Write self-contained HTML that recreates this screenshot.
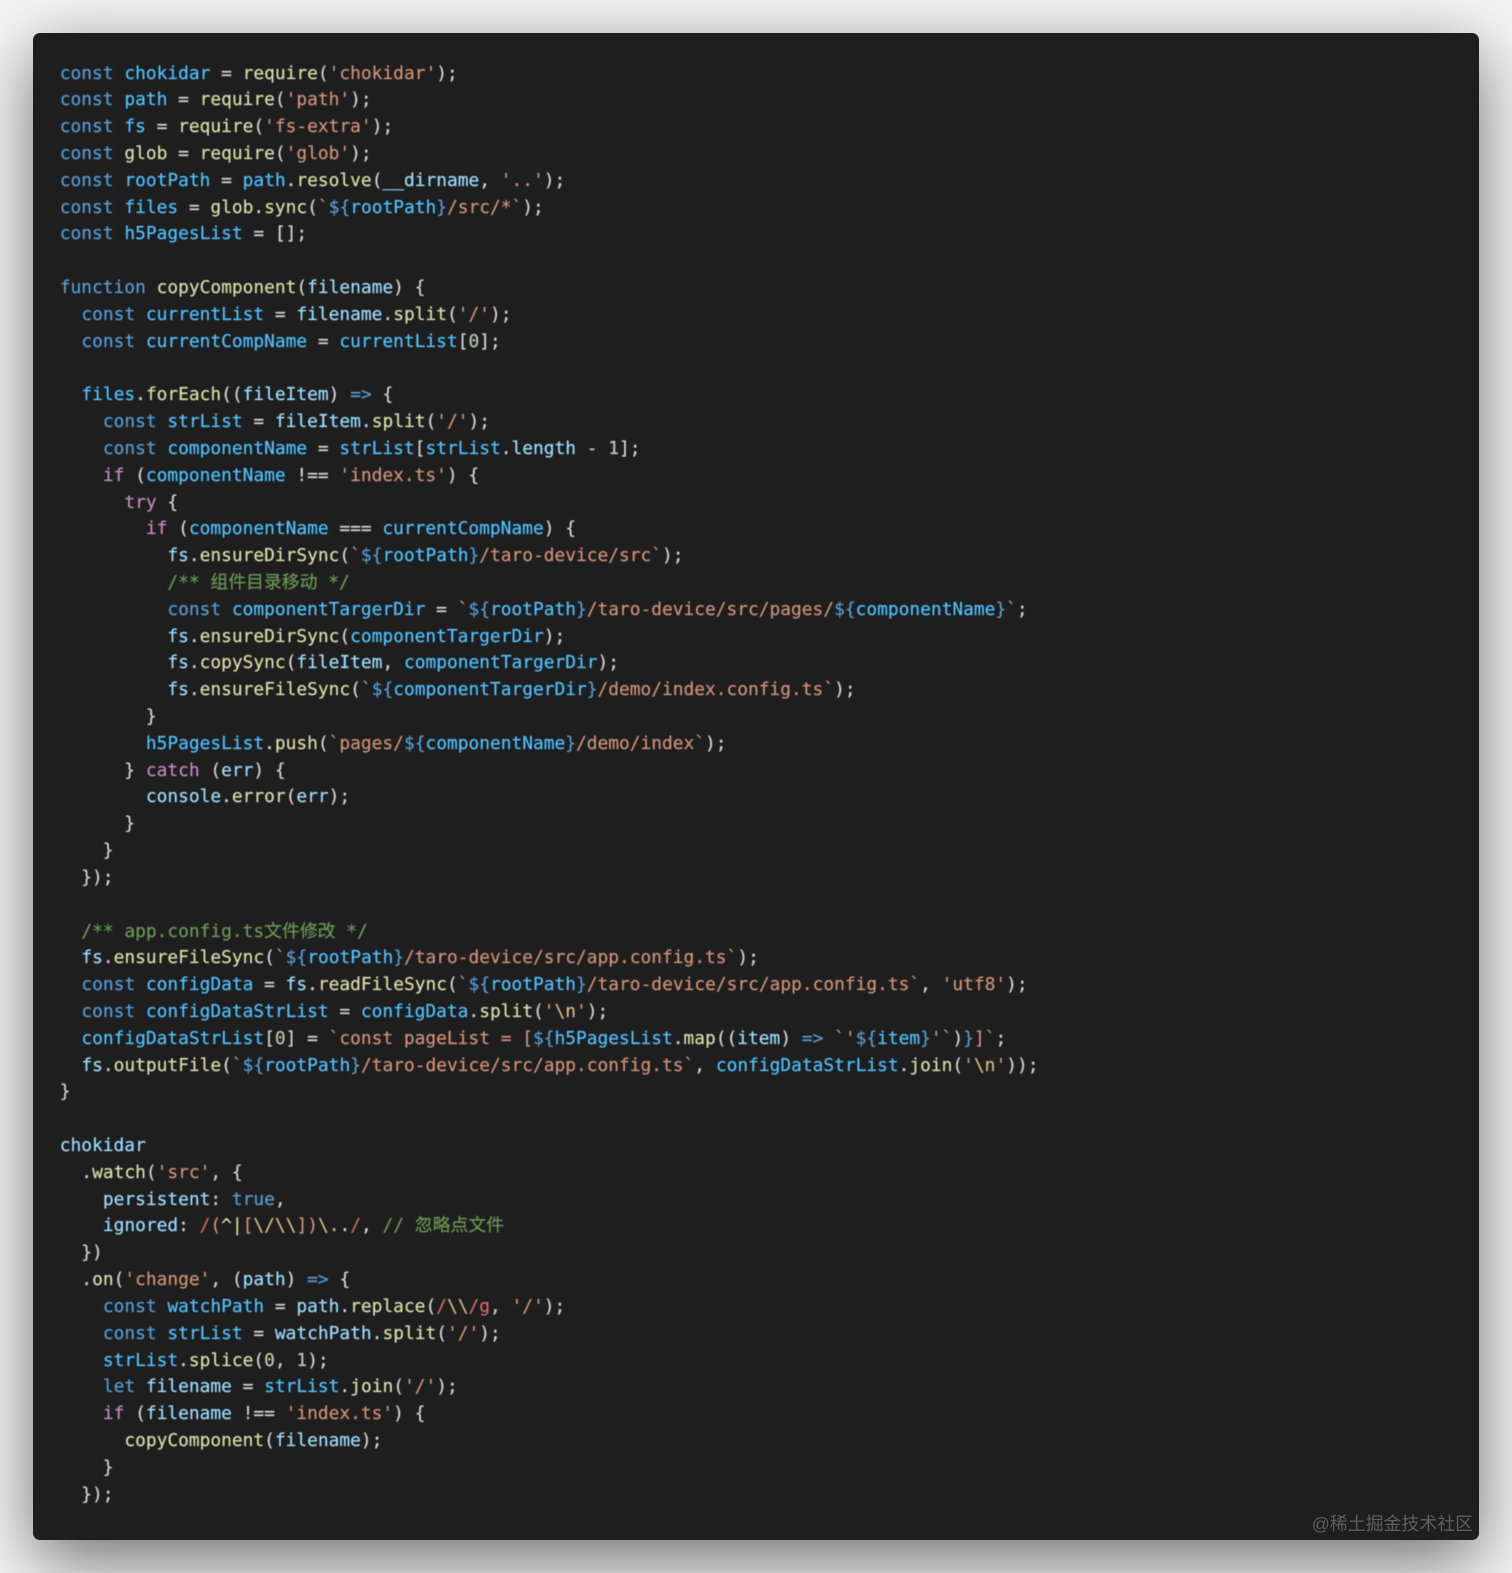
<!DOCTYPE html>
<html><head><meta charset="utf-8"><style>
html,body{margin:0;padding:0;background:#fff}
body{width:1512px;height:1573px;overflow:hidden;position:relative;background:#f4f4f4}
#card{position:absolute;left:33px;top:33px;width:1446px;height:1507px;background:#1e1e1e;border-radius:7px;box-shadow:0 20px 68px rgba(0,0,0,.55)}
pre{position:absolute;margin:0;left:59.8px;top:60.5px;font:17.87px/26.82px "DejaVu Sans Mono","Noto Sans CJK SC",monospace;color:#d4d4d4;filter:blur(.4px);white-space:pre;z-index:2;-webkit-text-stroke:.2px currentColor}
.k{color:#569cd6}.c{color:#4fc1ff}.v{color:#9cdcfe}.f{color:#dcdcaa}.s{color:#ce9178}.m{color:#6a9955}.p{color:#c586c0}.n{color:#b5cea8}.r{color:#d16969}.e{color:#d7ba7d}
#wm{position:absolute;right:39px;top:1513px;font:17.9px/22px "Liberation Sans","Noto Sans CJK SC",sans-serif;color:#5f5f5f;z-index:3;filter:blur(.3px)}
</style></head><body>
<div id="card"></div>
<pre><span class="k">const</span> <span class="c">chokidar</span> = <span class="f">require</span>(<span class="s">'chokidar'</span>);
<span class="k">const</span> <span class="c">path</span> = <span class="f">require</span>(<span class="s">'path'</span>);
<span class="k">const</span> <span class="c">fs</span> = <span class="f">require</span>(<span class="s">'fs-extra'</span>);
<span class="k">const</span> <span class="f">glob</span> = <span class="f">require</span>(<span class="s">'glob'</span>);
<span class="k">const</span> <span class="c">rootPath</span> = <span class="c">path</span>.<span class="f">resolve</span>(<span class="v">__dirname</span>, <span class="s">'..'</span>);
<span class="k">const</span> <span class="c">files</span> = <span class="f">glob</span>.<span class="f">sync</span>(<span class="s">`</span><span class="k">${</span><span class="c">rootPath</span><span class="k">}</span><span class="s">/src/*`</span>);
<span class="k">const</span> <span class="c">h5PagesList</span> = [];

<span class="k">function</span> <span class="f">copyComponent</span>(<span class="v">filename</span>) {
  <span class="k">const</span> <span class="c">currentList</span> = <span class="v">filename</span>.<span class="f">split</span>(<span class="s">'/'</span>);
  <span class="k">const</span> <span class="c">currentCompName</span> = <span class="c">currentList</span>[<span class="n">0</span>];

  <span class="c">files</span>.<span class="f">forEach</span>((<span class="v">fileItem</span>) <span class="k">=&gt;</span> {
    <span class="k">const</span> <span class="c">strList</span> = <span class="v">fileItem</span>.<span class="f">split</span>(<span class="s">'/'</span>);
    <span class="k">const</span> <span class="c">componentName</span> = <span class="c">strList</span>[<span class="c">strList</span>.<span class="v">length</span> - <span class="n">1</span>];
    <span class="p">if</span> (<span class="c">componentName</span> !== <span class="s">'index.ts'</span>) {
      <span class="p">try</span> {
        <span class="p">if</span> (<span class="c">componentName</span> === <span class="c">currentCompName</span>) {
          <span class="v">fs</span>.<span class="f">ensureDirSync</span>(<span class="s">`</span><span class="k">${</span><span class="c">rootPath</span><span class="k">}</span><span class="s">/taro-device/src`</span>);
          <span class="m">/** 组件目录移动 */</span>
          <span class="k">const</span> <span class="c">componentTargerDir</span> = <span class="s">`</span><span class="k">${</span><span class="c">rootPath</span><span class="k">}</span><span class="s">/taro-device/src/pages/</span><span class="k">${</span><span class="c">componentName</span><span class="k">}</span><span class="s">`</span>;
          <span class="v">fs</span>.<span class="f">ensureDirSync</span>(<span class="c">componentTargerDir</span>);
          <span class="v">fs</span>.<span class="f">copySync</span>(<span class="v">fileItem</span>, <span class="c">componentTargerDir</span>);
          <span class="v">fs</span>.<span class="f">ensureFileSync</span>(<span class="s">`</span><span class="k">${</span><span class="c">componentTargerDir</span><span class="k">}</span><span class="s">/demo/index.config.ts`</span>);
        }
        <span class="c">h5PagesList</span>.<span class="f">push</span>(<span class="s">`pages/</span><span class="k">${</span><span class="c">componentName</span><span class="k">}</span><span class="s">/demo/index`</span>);
      } <span class="p">catch</span> (<span class="v">err</span>) {
        <span class="v">console</span>.<span class="f">error</span>(<span class="v">err</span>);
      }
    }
  });

  <span class="m">/** app.config.ts文件修改 */</span>
  <span class="v">fs</span>.<span class="f">ensureFileSync</span>(<span class="s">`</span><span class="k">${</span><span class="c">rootPath</span><span class="k">}</span><span class="s">/taro-device/src/app.config.ts`</span>);
  <span class="k">const</span> <span class="c">configData</span> = <span class="v">fs</span>.<span class="f">readFileSync</span>(<span class="s">`</span><span class="k">${</span><span class="c">rootPath</span><span class="k">}</span><span class="s">/taro-device/src/app.config.ts`</span>, <span class="s">'utf8'</span>);
  <span class="k">const</span> <span class="c">configDataStrList</span> = <span class="c">configData</span>.<span class="f">split</span>(<span class="s">'</span><span class="e">\n</span><span class="s">'</span>);
  <span class="c">configDataStrList</span>[<span class="n">0</span>] = <span class="s">`const pageList = [</span><span class="k">${</span><span class="c">h5PagesList</span>.<span class="f">map</span>((<span class="v">item</span>) <span class="k">=&gt;</span> <span class="s">`'</span><span class="k">${</span><span class="c">item</span><span class="k">}</span><span class="s">'`</span>)<span class="k">}</span><span class="s">]`</span>;
  <span class="v">fs</span>.<span class="f">outputFile</span>(<span class="s">`</span><span class="k">${</span><span class="c">rootPath</span><span class="k">}</span><span class="s">/taro-device/src/app.config.ts`</span>, <span class="c">configDataStrList</span>.<span class="f">join</span>(<span class="s">'</span><span class="e">\n</span><span class="s">'</span>));
}

<span class="v">chokidar</span>
  .<span class="f">watch</span>(<span class="s">'src'</span>, {
    <span class="v">persistent</span>: <span class="k">true</span>,
    <span class="v">ignored</span>: <span class="r">/</span><span class="s">(</span><span class="f">^|</span><span class="s">[</span><span class="e">\/\\</span><span class="s">])</span><span class="e">\.</span><span class="f">.</span><span class="r">/</span>, <span class="m">// 忽略点文件</span>
  })
  .<span class="f">on</span>(<span class="s">'change'</span>, (<span class="v">path</span>) <span class="k">=&gt;</span> {
    <span class="k">const</span> <span class="c">watchPath</span> = <span class="v">path</span>.<span class="f">replace</span>(<span class="r">/</span><span class="e">\\</span><span class="r">/g</span>, <span class="s">'/'</span>);
    <span class="k">const</span> <span class="c">strList</span> = <span class="v">watchPath</span>.<span class="f">split</span>(<span class="s">'/'</span>);
    <span class="c">strList</span>.<span class="f">splice</span>(<span class="n">0</span>, <span class="n">1</span>);
    <span class="k">let</span> <span class="v">filename</span> = <span class="c">strList</span>.<span class="f">join</span>(<span class="s">'/'</span>);
    <span class="p">if</span> (<span class="v">filename</span> !== <span class="s">'index.ts'</span>) {
      <span class="f">copyComponent</span>(<span class="v">filename</span>);
    }
  });</pre>
<div id="wm">@稀土掘金技术社区</div>
</body></html>
